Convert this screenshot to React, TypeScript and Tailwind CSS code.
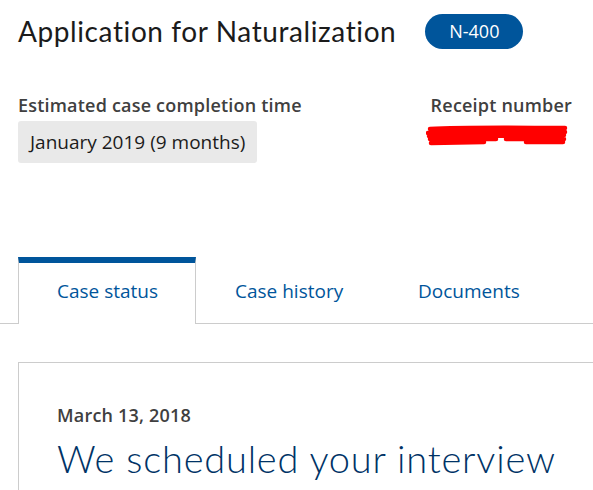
import React from 'react';

const tabs = [
  { label: 'Case status', width: 'w-[178px]' },
  { label: 'Case history', width: 'w-[183px]' },
  { label: 'Documents', width: 'w-[160px]' },
];

const Scribble: React.FC = () => (
  <svg width="142" height="24" viewBox="0 0 142 24" className="mt-[8px] -ml-[5px]">
    <path
      d="M4 5 C40 3 100 4 139 4 M2 9 C50 8 100 8 139 8 M3 12 C50 12 100 11 138 11 M4 15 L70 15 M80 15 L138 15 M5 19 L58 18 M100 18 L137 18"
      stroke="#ff0000"
      strokeWidth="4.5"
      strokeLinecap="round"
      fill="none"
    />
  </svg>
);

const App: React.FC = () => {
  return (
    <div className="w-[593px] h-[490px] overflow-hidden bg-white font-['Open_Sans',sans-serif] text-[#212121]">
      <header className="flex items-center gap-[29px] px-[18px] pt-[14px]">
        <h1 className="whitespace-nowrap font-['Lato',sans-serif] text-[28px] leading-[35px] tracking-[0.6px] font-normal text-[#1b1b1b]">
          Application for Naturalization
        </h1>
        <span className="flex h-[35px] w-[98px] items-center justify-center rounded-full bg-[#00559b] text-[18px] text-white">
          N-400
        </span>
      </header>

      <section className="mt-[45px] flex justify-between pl-[18px] pr-[21px]">
        <div>
          <div className="whitespace-nowrap text-[18px] font-semibold leading-[22px] tracking-[0.2px] text-[#404040]">
            Estimated case completion time
          </div>
          <div className="mt-[5px] flex h-[42px] w-fit items-center whitespace-nowrap rounded-[3px] bg-[#e9e9e9] px-[12px] text-[19px] text-[#1b1b1b]">
            January 2019 (9 months)
          </div>
        </div>
        <div>
          <div className="whitespace-nowrap text-[18px] font-semibold leading-[22px] tracking-[0.2px] text-[#404040]">
            Receipt number
          </div>
          <Scribble />
        </div>
      </section>

      <nav className="mt-[94px] flex border-b border-[#cccccc] pl-[18px]">
        {tabs.map((t, i) => (
          <div
            key={t.label}
            className={
              i === 0
                ? `-mb-px flex h-[67px] ${t.width} shrink-0 items-center whitespace-nowrap border-x border-t-[6px] border-x-[#cccccc] border-t-[#00559b] bg-white pb-[4px] pl-[38px] text-[19px] text-[#00559b]`
                : `flex h-[66px] ${t.width} shrink-0 items-center whitespace-nowrap pb-[4px] pl-[39px] pt-[6px] text-[19px] text-[#00559b]`
            }
          >
            {t.label}
          </div>
        ))}
      </nav>

      <article className="ml-[18px] mt-[38px] border border-r-0 border-[#cccccc] px-[38px] pb-[40px] pt-[41px]">
        <div className="text-[18px] font-semibold leading-[22px] tracking-[0.2px] text-[#404040]">March 13, 2018</div>
        <h2 className="mt-[9px] whitespace-nowrap font-['Lato',sans-serif] text-[38px] font-light leading-[46px] tracking-[0.8px] text-[#003366]">
          We scheduled your interview
        </h2>
      </article>
    </div>
  );
};

export default App;
